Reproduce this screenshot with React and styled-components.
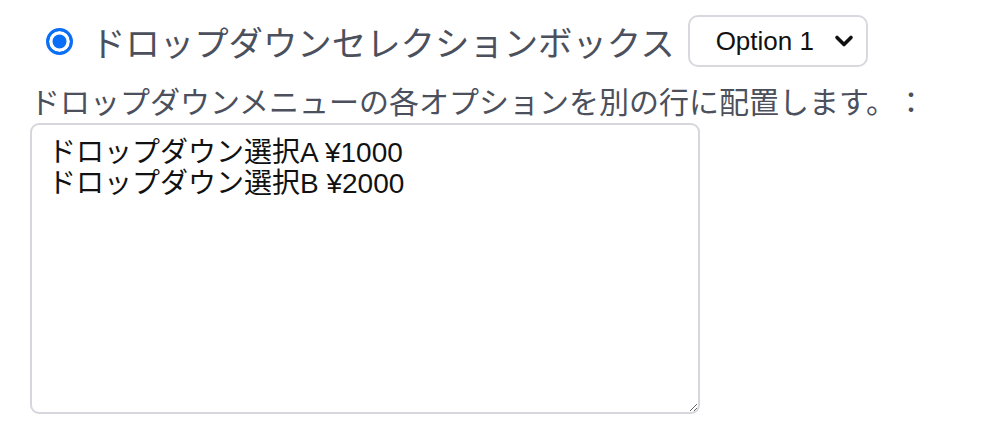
import styled, { createGlobalStyle } from "styled-components";

const GlobalStyle = createGlobalStyle`
	html, body {
		margin: 0;
		background: #ffffff;
	}
	body {
		font-family: "Liberation Sans", "Noto Sans CJK JP", sans-serif;
		text-spacing-trim: space-all;
	}
`;

const Page = styled.div`
	padding: 15px 0 0 30px;
`;

const Header = styled.div`
	display: flex;
	align-items: center;
	padding-left: 16px;
	height: 52px;
`;

const Radio = styled.input`
	appearance: none;
	box-sizing: border-box;
	width: 27px;
	height: 27px;
	margin: 0 18px 0 0;
	border-radius: 50%;
	border: 3px solid #0a6ff7;
	background: #0a6ff7;
	box-shadow: inset 0 0 0 3.5px #ffffff;
`;

const Title = styled.span`
	font-family: "Noto Sans CJK JP", sans-serif;
	font-size: 34.4px;
	color: #4b505c;
	margin-right: 13px;
	white-space: nowrap;
`;

const SelectWrap = styled.div`
	position: relative;
`;

const Select = styled.select`
	appearance: none;
	box-sizing: border-box;
	width: 180px;
	height: 52px;
	padding: 0 0 0 26px;
	border: 2px solid #d7d9df;
	border-radius: 10px;
	background: #ffffff;
	font-family: "Liberation Sans", sans-serif;
	font-size: 26px;
	color: #111111;
	outline: none;
`;

const Chevron = styled.svg`
	position: absolute;
	right: 14px;
	top: 50%;
	width: 20px;
	height: 14px;
	margin-top: -7px;
	pointer-events: none;
`;

const Label = styled.label`
	display: block;
	margin-top: 15px;
	font-family: "Noto Sans CJK JP", sans-serif;
	font-size: 30px;
	line-height: 36px;
	color: #4b505c;
	white-space: nowrap;
	text-spacing-trim: space-all;
`;

const TextArea = styled.textarea`
	display: block;
	box-sizing: border-box;
	width: 670px;
	height: 291px;
	margin-top: 5px;
	padding: 12px 16px;
	border: 2px solid #d5d7dd;
	border-radius: 9px;
	font-family: "Liberation Sans", "Noto Sans CJK JP", sans-serif;
	font-size: 28px;
	line-height: 31px;
	color: #111111;
	background: #ffffff;
	outline: none;
`;

function App() {
	return (
		<Page>
			<GlobalStyle />
			<Header>
				<Radio type="radio" name="mode" defaultChecked />
				<Title>ドロップダウンセレクションボックス</Title>
				<SelectWrap>
					<Select defaultValue="1">
						<option value="1">Option 1</option>
						<option value="2">Option 2</option>
					</Select>
					<Chevron viewBox="0 0 20 14">
						<path
							d="M3 3.5 L10 10.5 L17 3.5"
							fill="none"
							stroke="#111"
							strokeWidth="3.6"
							strokeLinecap="round"
							strokeLinejoin="round"
						/>
					</Chevron>
				</SelectWrap>
			</Header>
			<Label>ドロップダウンメニューの各オプションを別の行に配置します。：</Label>
			<TextArea
				defaultValue={"ドロップダウン選択A ¥1000\nドロップダウン選択B ¥2000"}
			/>
		</Page>
	);
}

export default App;
